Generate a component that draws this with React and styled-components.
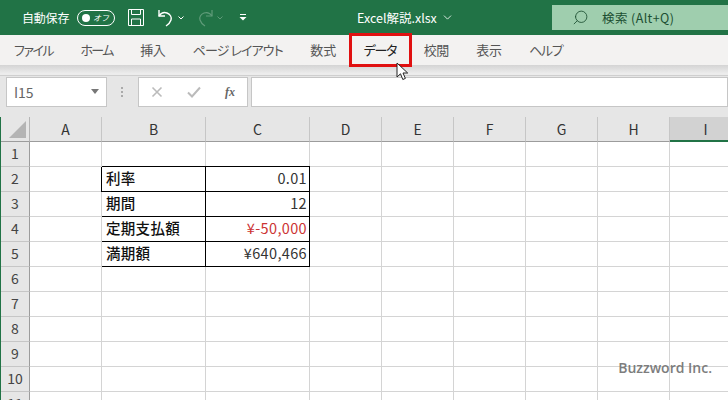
import React from 'react';
import styled, { createGlobalStyle } from 'styled-components';
import { Search, ChevronDown } from 'lucide-react';

const UI_FONT = `"Noto Sans CJK JP", "Noto Sans", sans-serif`;

const Global = createGlobalStyle`
  html, body { margin: 0; padding: 0; overflow: hidden; background: #fff; }
  * { box-sizing: border-box; }
`;

const Page = styled.div`
  position: relative;
  width: 728px;
  height: 400px;
  overflow: hidden;
  font-family: ${UI_FONT};
  background: #fff;
`;

const TitleBar = styled.div`
  display: flex;
  align-items: center;
  height: 35px;
  background: #217346;
  color: #fff;
`;

const AutoSave = styled.span`
  margin-left: 22px;
  font-size: 12px;
  letter-spacing: -0.2px;
  width: 49px;
  white-space: nowrap;
`;

const Toggle = styled.span`
  display: flex;
  align-items: center;
  justify-content: space-between;
  width: 38px;
  height: 16px;
  margin-left: 6px;
  padding: 0 5px 0 4px;
  border: 1px solid #fff;
  border-radius: 8px;
  font-size: 8px;
  font-style: italic;
  &::before {
    content: '';
    width: 8px;
    height: 8px;
    border-radius: 50%;
    background: #fff;
  }
`;

const QuickIcon = styled.svg`
  display: block;
  flex: none;
  margin-left: ${(p) => p.$left || 0}px;
`;

const FileName = styled.div`
  display: flex;
  align-items: center;
  gap: 4px;
  margin-left: 110px;
  width: 195px;
  font-size: 12.5px;
  white-space: nowrap;
`;

const SearchBox = styled.div`
  display: flex;
  align-items: center;
  align-self: flex-start;
  width: 176px;
  height: 25px;
  margin-top: 5px;
  padding-left: 20px;
  background: #9fceae;
  color: #1c4f32;
  font-size: 12.5px;
  white-space: nowrap;
  span { margin-left: 13px; letter-spacing: 0.4px; }
`;

const TabBar = styled.div`
  display: flex;
  align-items: center;
  height: 30px;
  padding-left: 14px;
  gap: 27.5px;
  background: #f3f2f1;
`;

const Tab = styled.div`
  position: relative;
  font-size: 13px;
  line-height: 18px;
  font-feature-settings: 'palt';
  letter-spacing: ${(p) => p.$squeeze || 0}px;
  color: ${(p) => (p.$active ? '#222' : '#555')};
  white-space: nowrap;
  &::after {
    content: '';
    display: ${(p) => (p.$active ? 'block' : 'none')};
    position: absolute;
    left: -15px;
    right: -16px;
    top: -8px;
    bottom: -8px;
    border: 3px solid #e01010;
  }
`;

const Pointer = styled.svg`
  position: absolute;
  left: 32px;
  top: 21px;
  z-index: 2;
`;

const RibbonShade = styled.div`
  height: 11px;
  background: linear-gradient(#d4d4d4, #ececec 85%);
  border-bottom: 1px solid #cfcfcf;
`;

const FormulaRow = styled.div`
  display: flex;
  align-items: flex-start;
  height: 41px;
  padding: 1px 0 0 6px;
  background: #e6e6e6;
`;

const Field = styled.div`
  display: flex;
  align-items: center;
  height: 30px;
  background: #fff;
  border: 1px solid #c6c6c6;
`;

const NameBox = styled(Field)`
  width: 101px;
  padding: 0 7px;
  justify-content: space-between;
  font-size: 14px;
  color: #666;
  &::after {
    content: '';
    border: 4px solid transparent;
    border-top: 5px solid #777;
    margin: 3px 0 0;
  }
`;

const Dots = styled.span`
  width: 2px;
  height: 10px;
  margin: 10px 15px 0 14px;
  background: repeating-linear-gradient(#aaa 0 2px, transparent 2px 4px);
`;

const FormulaButtons = styled(Field)`
  width: 110px;
  justify-content: space-between;
  padding: 0 12px;
  color: #bbb;
`;

const FxLabel = styled.span`
  font-family: "Liberation Serif", serif;
  font-style: italic;
  font-weight: bold;
  font-size: 12px;
  color: #666;
`;

const FormulaInput = styled(Field)`
  flex: 1;
  margin-left: 3px;
`;

const Sheet = styled.div`
  display: grid;
  grid-template-columns: 29px 72px 104px 104px repeat(6, 72px);
  grid-template-rows: repeat(12, 25px);
  border-left: 1px solid #217346;
`;

const Corner = styled.div`
  position: relative;
  background: #e6e6e6;
  border-right: 1px solid #b5b5b5;
  border-bottom: 1px solid #9c9c9c;
  &::after {
    content: '';
    position: absolute;
    right: 3px;
    bottom: 3px;
    border-style: solid;
    border-width: 0 0 17px 17px;
    border-color: transparent transparent #b4b4b4 transparent;
  }
`;

const ColHead = styled.div`
  display: flex;
  align-items: center;
  justify-content: center;
  font-size: 14px;
  color: #333;
  background: ${(p) => (p.$selected ? '#d2d2d2' : '#e6e6e6')};
  border-right: 1px solid #c6c6c6;
  border-bottom: ${(p) => (p.$selected ? '2px solid #217346' : '1px solid #9c9c9c')};
`;

const RowHead = styled.div`
  display: flex;
  align-items: center;
  justify-content: center;
  padding-bottom: 2px;
  font-size: 14px;
  color: #444;
  background: #e6e6e6;
  border-right: 1px solid #9c9c9c;
  border-bottom: 1px solid #c6c6c6;
`;

const Cell = styled.div`
  display: flex;
  align-items: center;
  justify-content: ${(p) => (p.$right ? 'flex-end' : 'flex-start')};
  padding: 0 2px 3px 4px;
  font-size: 14.5px;
  font-weight: ${(p) => (p.$right ? 400 : 500)};
  letter-spacing: ${(p) => (p.$right ? 0.35 : 0.3)}px;
  color: ${(p) => (p.$red ? '#cc3333' : p.$right ? '#333' : '#111')};
  border-right: 1px solid ${(p) => (p.$boxed ? '#000' : '#d4d4d4')};
  border-bottom: 1px solid ${(p) => (p.$boxed ? '#000' : '#d4d4d4')};
  box-shadow: ${(p) => (p.$boxed && p.$topRow ? '0 -1px 0 #000' : 'none')}${(p) => (p.$boxed && !p.$right ? ', -1px 0 0 #000' : '')};
  white-space: nowrap;
`;

const Watermark = styled.div`
  position: absolute;
  right: 16px;
  top: 358px;
  font-family: "Open Sans", sans-serif;
  font-size: 14px;
  font-weight: 600;
  color: #777;
  opacity: 0.95;
`;

const COLS = ['A', 'B', 'C', 'D', 'E', 'F', 'G', 'H', 'I'];
const TABS = [
  { label: 'ファイル', squeeze: -1.5 },
  { label: 'ホーム', squeeze: -1.7 },
  { label: '挿入', squeeze: -0.5 },
  { label: 'ページ レイアウト', squeeze: -0.9 },
  { label: '数式' },
  { label: 'データ', squeeze: -1.3, active: true },
  { label: '校閲', squeeze: -0.4 },
  { label: '表示', squeeze: -0.4 },
  { label: 'ヘルプ', squeeze: -1.3 },
];
const DATA = {
  2: ['利率', '0.01'],
  3: ['期間', '12'],
  4: ['定期支払額', '¥-50,000'],
  5: ['満期額', '¥640,466'],
};

const renderRow = (row) => {
  const cells = [<RowHead key="head">{row}</RowHead>];
  COLS.forEach((col) => {
    const entry = DATA[row];
    if (entry && col === 'B') {
      cells.push(<Cell key={col} $boxed $topRow={row === 2}>{entry[0]}</Cell>);
    } else if (entry && col === 'C') {
      cells.push(<Cell key={col} $boxed $right $red={row === 4} $topRow={row === 2}>{entry[1]}</Cell>);
    } else {
      cells.push(<Cell key={col} />);
    }
  });
  return <React.Fragment key={row}>{cells}</React.Fragment>;
};

export default function App() {
  return (
    <Page>
      <Global />
      <TitleBar>
        <AutoSave>自動保存</AutoSave>
        <Toggle>オフ</Toggle>
        <QuickIcon $left={13} width="16" height="17" viewBox="0 0 16 17" fill="none" stroke="#fff" strokeWidth="1">
          <path d="M.5.5h15v16H.5z" />
          <path d="M3.5.5v5h9v-5M3.5 16.5v-6.5h9v6.5" />
        </QuickIcon>
        <QuickIcon $left={13} width="18" height="18" viewBox="0 0 18 18" fill="none" stroke="#fff" strokeWidth="1.4">
          <path d="M2 1v6h6" />
          <path d="M2 7c2-3 5-4 8-3 3 1 5 4 4 7-.6 2-2 4-5 6" />
        </QuickIcon>
        <QuickIcon $left={3} width="6" height="4" viewBox="0 0 6 4" fill="none" stroke="#fff" strokeWidth="1">
          <path d="M.5.5 3 3 5.500.5" />
        </QuickIcon>
        <QuickIcon $left={12} width="18" height="18" viewBox="0 0 18 18" fill="none" stroke="#5f9b79" strokeWidth="1.2">
          <path d="M16 1v6h-6" />
          <path d="M16 7c-2-3-5-4-8-3-3 1-5 4-4 7 .6 2 2 4 5 6" />
        </QuickIcon>
        <QuickIcon $left={3} width="6" height="4" viewBox="0 0 6 4" fill="none" stroke="#5f9b79" strokeWidth="1">
          <path d="M.5.5 3 3 5.500.5" />
        </QuickIcon>
        <QuickIcon $left={16} width="8" height="7" viewBox="0 0 8 7" fill="none" stroke="#fff" strokeWidth="1">
          <path d="M1 .5h6" />
          <path d="M.500 3 4 6.500 7.500 3z" fill="#fff" stroke="none" />
        </QuickIcon>
        <FileName>
          Excel解説.xlsx
          <ChevronDown size={13} strokeWidth={1.5} />
        </FileName>
        <SearchBox>
          <Search size={17} strokeWidth={1.2} style={{ transform: 'scaleX(-1)' }} />
          <span>検索 (Alt+Q)</span>
        </SearchBox>
      </TitleBar>
      <TabBar>
        {TABS.map((t) => (
          <Tab key={t.label} $active={t.active} $squeeze={t.squeeze}>
            {t.label}
            {t.active && (
              <Pointer width="13" height="19" viewBox="0 0 13 19" fill="#fff" stroke="#222" strokeWidth="1">
                <path d="M1 1v14l3.500-3.200 2.300 5.700 2.600-1.100-2.400-5.400h4.700z" />
              </Pointer>
            )}
          </Tab>
        ))}
      </TabBar>
      <RibbonShade />
      <FormulaRow>
        <NameBox>I15</NameBox>
        <Dots />
        <FormulaButtons>
          <svg width="12" height="12" viewBox="0 0 12 12" stroke="#bbb" strokeWidth="1.6" fill="none">
            <path d="M1.500 1.500l9 9M10.500 1.500l-9 9" />
          </svg>
          <svg width="14" height="12" viewBox="0 0 14 12" stroke="#bbb" strokeWidth="2" fill="none">
            <path d="M1 6.500l4 4 8-9" />
          </svg>
          <FxLabel>fx</FxLabel>
        </FormulaButtons>
        <FormulaInput />
      </FormulaRow>
      <Sheet>
        <Corner />
        {COLS.map((c) => (
          <ColHead key={c} $selected={c === 'I'}>{c}</ColHead>
        ))}
        {[1, 2, 3, 4, 5, 6, 7, 8, 9, 10, 11].map(renderRow)}
      </Sheet>
      <Watermark>Buzzword Inc.</Watermark>
    </Page>
  );
}
